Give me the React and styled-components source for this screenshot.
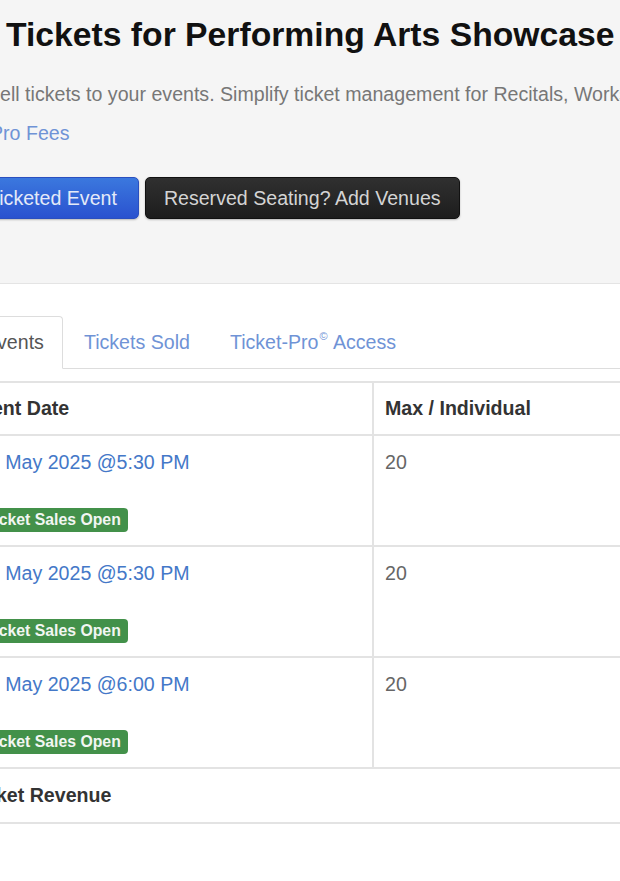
import React from 'react'
import styled, { createGlobalStyle } from 'styled-components'

const GlobalStyle = createGlobalStyle`
  * { box-sizing: border-box; }
  html, body {
    margin: 0;
    padding: 0;
    background: #fff;
  }
  body {
    font-family: "Liberation Sans", Arial, sans-serif;
    font-size: 19.6px;
    line-height: 28px;
    color: #333;
  }
`

// the page is a cropped view, so the shell runs past both window edges
const Page = styled.div`
  width: 620px;
  height: 881px;
  overflow: hidden;
  background: #fff;
`
const Shell = styled.div`
  width: 780px;
  margin-left: -35px;
`

const Header = styled.header`
  background: #f5f5f5;
  border-bottom: 1px solid #e4e4e4;
  padding: 14px 0 64px 22px;
`
const Title = styled.h2`
  margin: 0 0 0 19px;
  font-size: 33.7px;
  line-height: 40px;
  font-weight: 700;
  color: #111;
  white-space: nowrap;
`
const Lead = styled.p`
  margin: 26px 0 0;
  color: #777;
  white-space: nowrap;
`
const FeeLink = styled.a`
  display: block;
  margin: 11px 0 0 3px;
  color: #6f93d6;
  text-decoration: none;
`
const Actions = styled.div`
  display: flex;
  gap: 6px;
  margin: 30px 0 0 -18px;
`
const Button = styled.button`
  font: inherit;
  line-height: 28px;
  padding: 6px ${({ $dark }) => ($dark ? '18px' : '21px')} 6px 18px;
  border-radius: 5px;
  cursor: pointer;
  border: 1px solid ${({ $dark }) => ($dark ? '#111' : '#2a4fbf')};
  color: ${({ $dark }) => ($dark ? '#d4d4d4' : '#e4eaf8')};
  background: ${({ $dark }) =>
    $dark ? 'linear-gradient(#303030, #1d1d1d)' : 'linear-gradient(#3b78de, #2a52cf)'};
  box-shadow: 0 1px 2px rgba(0, 0, 0, 0.25);
`

const Panel = styled.section`
  padding-top: 32px;
`
const Tabs = styled.ul`
  display: flex;
  list-style: none;
  margin: 0;
  padding: 0;
  border-bottom: 1px solid #ddd;
`
const Tab = styled.li`
  margin: 0 2px -1px 0;
`
const TabLink = styled.a`
  display: block;
  padding: 10.5px 18px 12.5px;
  border: 1px solid ${({ $active }) => ($active ? '#ddd' : 'transparent')};
  border-bottom-color: ${({ $active }) => ($active ? '#fff' : 'transparent')};
  border-radius: 4px 4px 0 0;
  background: ${({ $active }) => ($active ? '#fff' : 'transparent')};
  color: ${({ $active }) => ($active ? '#555' : '#6f93d6')};
  text-decoration: none;
  white-space: nowrap;
`
const Sup = styled.sup`
  font-size: 11px;
  line-height: 0;
  vertical-align: 9px;
  margin: 0 1px 0 1px;
`

const Table = styled.table`
  width: 780px;
  margin-top: 12px;
  border-collapse: collapse;
  table-layout: fixed;
`
const Th = styled.th`
  border: 2px solid #e3e3e3;
  padding: 11px 11px 12px ${({ $tight }) => ($tight ? '1px' : '11px')};
  text-align: left;
  font-weight: 700;
  color: #333;
  white-space: nowrap;
`
const Td = styled.td`
  border: 2px solid #e3e3e3;
  padding: 12px 11px 13px ${({ $tight }) => ($tight ? '1px' : '11px')};
  vertical-align: top;
  color: ${({ $muted }) => ($muted ? '#666' : '#333')};
  font-weight: ${({ $bold }) => ($bold ? 700 : 400)};
  white-space: nowrap;
`
const DateCell = styled.div`
  display: flex;
  flex-direction: column;
  align-items: flex-start;
`
const DateLink = styled.a`
  color: #4478c8;
  text-decoration: none;
`
const Badge = styled.span`
  margin-top: 32px;
  padding: 0 7px;
  line-height: 24px;
  font-size: 15.8px;
  font-weight: 700;
  color: #f2f6f2;
  background: #43914a;
  border-radius: 4px;
`

const events = [
  { date: '17 May 2025 @5:30 PM', max: 20 },
  { date: '18 May 2025 @5:30 PM', max: 20 },
  { date: '18 May 2025 @6:00 PM', max: 20 },
]

export default function App() {
  return (
    <Page>
      <GlobalStyle />
      <Shell>
        <Header>
          <Title>Tickets for Performing Arts Showcase</Title>
          <Lead>
            Sell tickets to your events. Simplify ticket management for Recitals, Workshops and Showcases.
          </Lead>
          <FeeLink href="#">Pro Fees</FeeLink>
          <Actions>
            <Button>Ticketed Event</Button>
            <Button $dark>Reserved Seating? Add Venues</Button>
          </Actions>
        </Header>

        <Panel>
          <Tabs>
            <Tab>
              <TabLink href="#" $active>Events</TabLink>
            </Tab>
            <Tab>
              <TabLink href="#">Tickets Sold</TabLink>
            </Tab>
            <Tab>
              <TabLink href="#">
                Ticket-Pro<Sup>©</Sup> Access
              </TabLink>
            </Tab>
          </Tabs>

          <Table>
            <colgroup>
              <col style={{ width: 407 }} />
              <col />
            </colgroup>
            <thead>
              <tr>
                <Th $tight>Event Date</Th>
                <Th>Max / Individual</Th>
              </tr>
            </thead>
            <tbody>
              {events.map((ev, i) => (
                <tr key={i}>
                  <Td>
                    <DateCell>
                      <DateLink href="#">{ev.date}</DateLink>
                      <Badge>Ticket Sales Open</Badge>
                    </DateCell>
                  </Td>
                  <Td $muted>{ev.max}</Td>
                </tr>
              ))}
              <tr>
                <Td colSpan={2} $bold $tight>Ticket Revenue</Td>
              </tr>
            </tbody>
          </Table>
        </Panel>
      </Shell>
    </Page>
  )
}
